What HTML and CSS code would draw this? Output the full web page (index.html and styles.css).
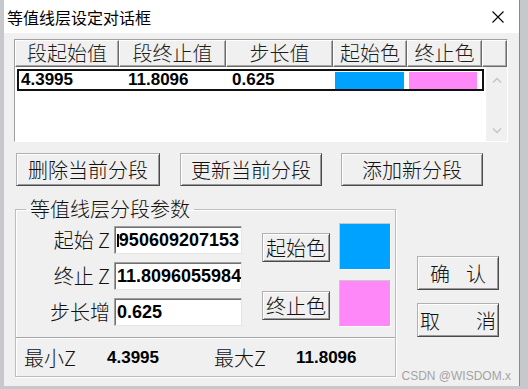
FILE: index.html
```html
<!DOCTYPE html>
<html lang="zh-CN">
<head>
  <meta charset="UTF-8" />
  <title>等值线层设定对话框</title>
  <link rel="stylesheet" href="styles.css">
</head>
<body>
  <div class="dlg">
    <div class="titlebar">
      <span class="title">等值线层设定对话框</span>
      <svg class="close" width="12" height="12" viewBox="0 0 12 12">
        <path d="M0.5 0.5 L11.5 11.5 M11.5 0.5 L0.5 11.5" stroke="#000" stroke-width="1.1" fill="none"/>
      </svg>
    </div>

    <div class="client">
      <div class="list">
        <div class="lhead">
          <div class="hcell h1">段起始值</div>
          <div class="hcell h2">段终止值</div>
          <div class="hcell h3">步长值</div>
          <div class="hcell h4">起始色</div>
          <div class="hcell h5">终止色</div>
          <div class="hcell h6"></div>
        </div>
        <div class="lbody">
          <div class="rows">
            <div class="row">
              <span class="c1">4.3995</span>
              <span class="c2">11.8096</span>
              <span class="c3">0.625</span>
              <span class="sw blue"></span>
              <span class="sw pink"></span>
            </div>
          </div>
          <div class="vscroll">
            <svg width="10" height="6" viewBox="0 0 10 6"><path d="M1 5.5 L5 1.5 L9 5.5" stroke="#c4c4c4" stroke-width="1.4" fill="none"/></svg>
            <svg width="10" height="6" viewBox="0 0 10 6"><path d="M1 0.5 L5 4.5 L9 0.5" stroke="#c4c4c4" stroke-width="1.4" fill="none"/></svg>
          </div>
        </div>
      </div>

      <div class="actions">
        <div class="btn a1">删除当前分段</div>
        <div class="btn a2">更新当前分段</div>
        <div class="btn a3">添加新分段</div>
      </div>

      <div class="lower">
        <fieldset class="group">
          <legend>等值线层分段参数</legend>
          <div class="gtop">
            <div class="fields">
              <div class="frow">
                <span class="flabel">起始 Z</span>
                <div class="fin endview"><span class="caret"></span><span>950609207153</span></div>
              </div>
              <div class="frow">
                <span class="flabel">终止 Z</span>
                <div class="fin"><span>11.8096055984</span></div>
              </div>
              <div class="frow">
                <span class="flabel">步长增</span>
                <div class="fin"><span>0.625</span></div>
              </div>
            </div>
            <div class="cbtns">
              <div class="btn cbtn">起始色</div>
              <div class="btn cbtn">终止色</div>
            </div>
            <div class="swatches">
              <div class="bigsw blue"></div>
              <div class="bigsw pink"></div>
            </div>
          </div>
          <div class="sep"></div>
          <div class="gbot">
            <span class="b1">最小Z</span>
            <span class="b2 num">4.3995</span>
            <span class="b3">最大Z</span>
            <span class="num">11.8096</span>
          </div>
        </fieldset>

        <div class="side">
          <div class="btn sbtn ok"><span>确</span><span>认</span></div>
          <div class="btn sbtn cancel"><span>取</span><span>消</span></div>
        </div>
      </div>

      <div class="mark">CSDN @WISDOM.x</div>
    </div>
  </div>
</body>
</html>
```

FILE: styles.css
```css
* {
  box-sizing: border-box;
}

body {
  margin: 0;
  width: 528px;
  height: 389px;
  overflow: hidden;
  background: #c6c8cc;
  font-family: "Noto Sans CJK SC", "Liberation Sans", sans-serif;
  font-weight: 300;
  color: #111;
}

.dlg {
  margin-left: 4px;
  width: 515px;
  height: 386px;
  box-shadow: 1px 0 #8a8a8a;
}

.titlebar {
  height: 33px;
  background: #fff;
  display: flex;
  align-items: center;
  padding: 0 15px 0 3px;
}

.title {
  flex: 1;
  font-size: 16px;
  line-height: 20px;
  font-weight: 400;
  color: #000;
}

.close {
  display: block;
}

.client {
  position: relative;
  height: 353px;
  background: #f0f0f0;
  padding: 6px 0 0 10px;
}

/* list control */
.list {
  width: 494px;
  height: 103px;
  border: 1px solid;
  border-color: #a0a0a0 #fff #fff #a0a0a0;
}

.lhead {
  display: flex;
  height: 27px;
}

.hcell {
  height: 27px;
  background: #f0f0f0;
  border-top: 1px solid #fff;
  border-left: 1px solid #fff;
  border-right: 1px solid #6a6a6a;
  border-bottom: 1px solid #6a6a6a;
  box-shadow: inset -1px -1px #a8a8a8;
  font-size: 20px;
  line-height: 24px;
  text-align: center;
  color: #1c1c1c;
}

.h1 { width: 104px; }
.h2 { width: 107px; }
.h3 { width: 107px; }
.h4 { width: 74px; }
.h5 { width: 75px; }
.h6 { width: 25px; }

.lbody {
  display: flex;
  height: 74px;
  background: #fff;
}

.rows {
  flex: 1;
  padding: 2px 0 0 2px;
}

.row {
  width: 467px;
  height: 22px;
  border: 2px solid #111;
  display: flex;
  align-items: center;
  padding-left: 2px;
  font-family: "Liberation Sans", Arial, sans-serif;
  font-weight: bold;
  font-size: 17px;
  color: #000;
}

.c1 { width: 107px; }
.c2 { width: 104px; }
.c3 { width: 103px; }

.sw {
  height: 17px;
}

.sw.blue {
  width: 69px;
  margin-right: 5px;
}

.sw.pink {
  width: 68px;
}

.blue { background: #00a2ff; }
.pink { background: #ff88f8; }

.vscroll {
  width: 21px;
  background: #f0f0f0;
  display: flex;
  flex-direction: column;
  justify-content: space-between;
  align-items: center;
  padding: 10px 0 7px;
}

.vscroll svg {
  display: block;
}

/* buttons */
.btn {
  background: #f0f0f0;
  border: 1px solid;
  border-color: #b0b0b0 #4a4a4a #4a4a4a #b0b0b0;
  box-shadow: inset 1px 1px #fff, inset -1px -1px #9a9a9a;
  font-size: 20px;
  display: flex;
  align-items: center;
  justify-content: center;
  color: #111;
}

.actions {
  display: flex;
  margin-top: 11px;
  padding-left: 2px;
}

.actions .btn {
  height: 33px;
}

.a1 { width: 144px; }
.a2 { width: 142px; margin-left: 20px; }
.a3 { width: 142px; margin-left: 19px; }

/* group */
.lower {
  display: flex;
  margin-top: 12px;
  padding-left: 1px;
}

.group {
  width: 381px;
  margin: 0;
  padding: 0;
  min-width: 0;
  border: 1px solid #bdbdbd;
  box-shadow: 1px 1px #fff, inset 1px 1px #fff;
}

.group legend {
  margin-left: 10px;
  padding: 0 4px;
  font-size: 20px;
  line-height: 22px;
  color: #111;
}

.gtop {
  display: flex;
  height: 117px;
}

.fields {
  width: 226px;
  padding-top: 6px;
}

.frow {
  display: flex;
  align-items: center;
  height: 28px;
}

.frow + .frow {
  margin-top: 8px;
}

.flabel {
  width: 94px;
  margin-right: 4px;
  text-align: right;
  font-size: 20px;
  line-height: 28px;
}

.fin {
  width: 128px;
  height: 28px;
  background: #fff;
  border: 1px solid;
  border-color: #a0a0a0 #e6e6e6 #e6e6e6 #a0a0a0;
  box-shadow: inset 1px 1px #707070;
  display: flex;
  align-items: center;
  overflow: hidden;
  padding: 0 2px;
  font-family: "Liberation Sans", Arial, sans-serif;
  font-weight: bold;
  font-size: 18px;
  color: #000;
  white-space: nowrap;
}

.fin.endview {
  justify-content: space-between;
  padding-left: 2px;
}

.caret {
  width: 2px;
  height: 13px;
  background: #000;
}

.cbtns {
  margin-left: 20px;
  padding-top: 13px;
}

.cbtn {
  width: 68px;
  height: 29px;
}

.cbtn + .cbtn {
  margin-top: 29px;
}

.swatches {
  margin-left: 9px;
  padding-top: 3px;
}

.bigsw {
  width: 52px;
  height: 47px;
  border: 1px solid;
  border-color: #c8c8c8 #fff #fff #c8c8c8;
}

.bigsw + .bigsw {
  margin-top: 10px;
}

.sep {
  height: 2px;
  border-top: 1px solid #a8a8a8;
  border-bottom: 1px solid #fff;
}

.gbot {
  display: flex;
  align-items: center;
  height: 37px;
  padding-left: 8px;
  font-size: 20px;
}

.b1 { width: 83px; }
.b2 { width: 107px; }
.b3 { width: 82px; }

.num {
  font-family: "Liberation Sans", Arial, sans-serif;
  font-weight: bold;
  font-size: 17px;
  color: #000;
}

.side {
  margin-left: 21px;
  padding-top: 58px;
}

.sbtn {
  width: 82px;
  height: 34px;
}

.sbtn + .sbtn {
  margin-top: 13px;
}

.ok { gap: 16px; }
.cancel { gap: 36px; }

.mark {
  position: absolute;
  right: 8px;
  bottom: 3px;
  font-family: "Liberation Sans", Arial, sans-serif;
  font-size: 12px;
  font-weight: 400;
  color: #a4a4a4;
}
```
